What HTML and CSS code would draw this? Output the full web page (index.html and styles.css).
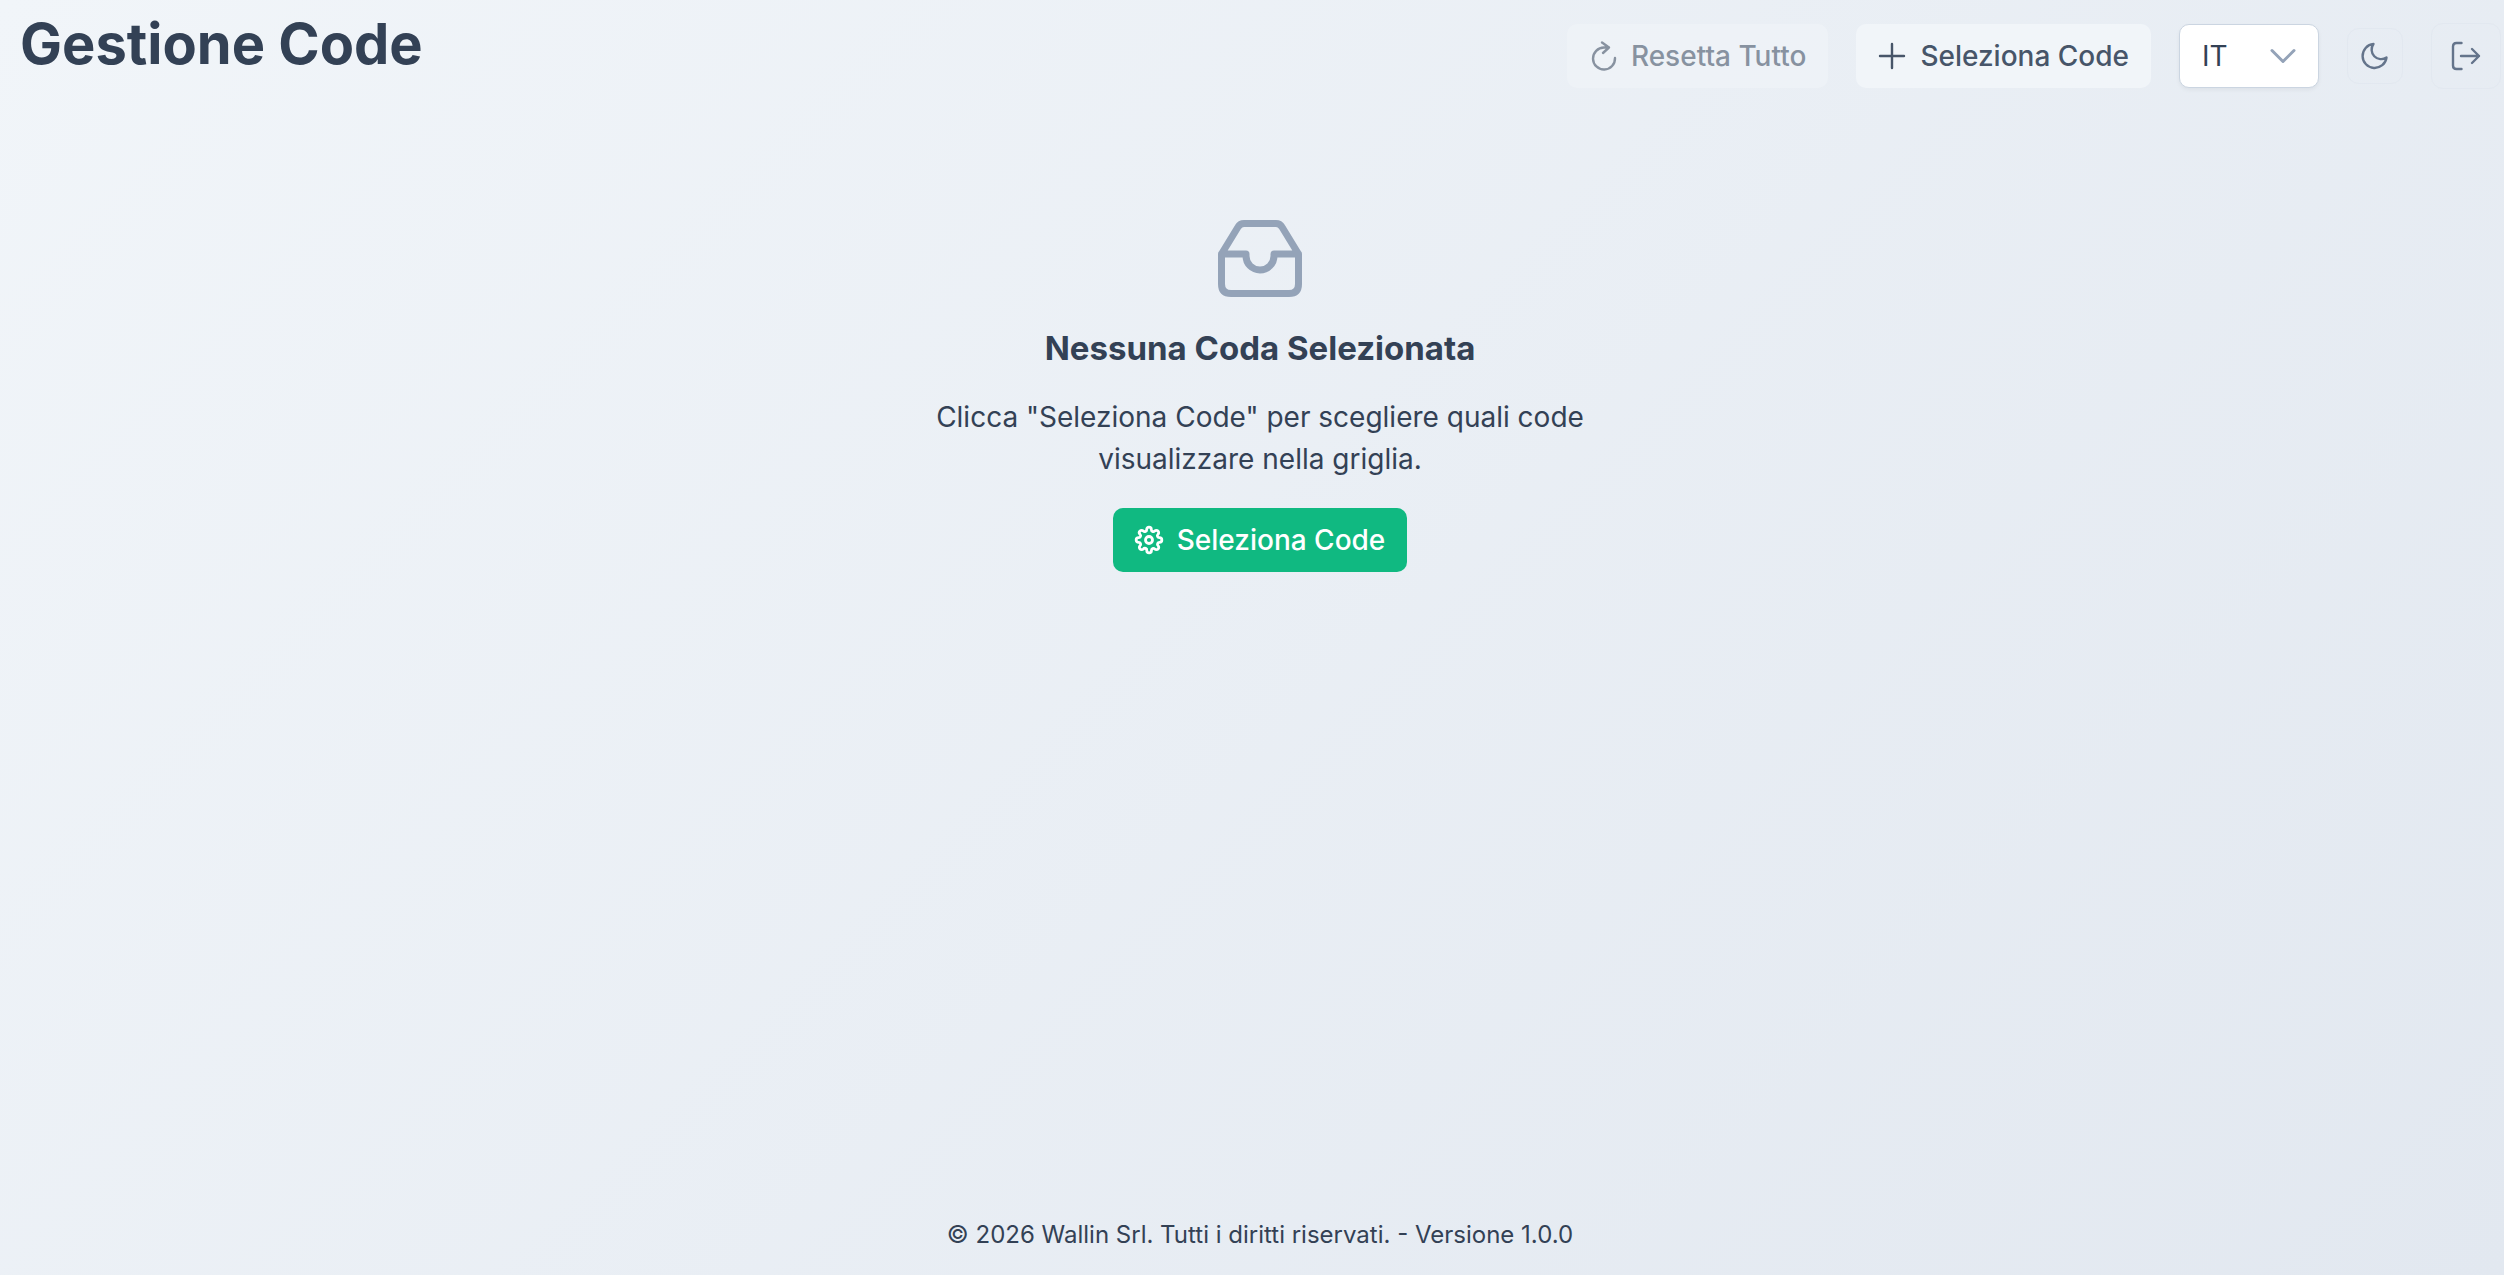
FILE: index.html
```
<!DOCTYPE html>
<html lang="it">
<head>
	<meta charset="UTF-8">
	<meta name="viewport" content="width=device-width, initial-scale=1">
	<title>Gestione Code</title>
	<link rel="stylesheet" href="styles.css">
</head>

<body>
	<div class="layout">
		<header class="topbar">
			<h1>Gestione Code</h1>
			<div class="toolbar">
				<button type="button" class="btn btn-light" disabled>
					<svg class="icon" viewBox="0 0 28 28"><path d="M13 0.5L20 5.5L14 11M20 5.5H15A11 11 0 1 0 26 16"/></svg>
					<span>Resetta Tutto</span>
				</button>
				<button type="button" class="btn btn-light">
					<svg class="icon" viewBox="0 0 28 28"><path d="M14 2V26M2 14H26"/></svg>
					<span>Seleziona Code</span>
				</button>
				<div class="lang">
					<select aria-label="Lingua">
						<option>IT</option>
						<option>EN</option>
					</select>
					<svg class="icon" viewBox="0 0 28 28"><path d="M3 8.5L14 19.5L25 8.5"/></svg>
				</div>
				<button type="button" class="btn-icon btn-theme" aria-label="Tema scuro">
					<svg class="icon" viewBox="0 0 28 28"><path d="M12.5 2A12 12 0 1 0 25.5 15.5A9.500 9.500 0 0 1 12.5 2Z"/></svg>
				</button>
				<button type="button" class="btn-icon btn-logout" aria-label="Esci">
					<svg class="icon" viewBox="0 0 28 28"><path d="M9.500 1H4.500Q1 1 1 4.500V23.500Q1 27 4.500 27H9.500M9 14H27M20 7L27 14L20 21"/></svg>
				</button>
			</div>
		</header>

		<main class="empty">
			<svg class="icon-inbox" viewBox="0 0 84 84"><path d="M3.500 38L20 11Q22 7.500 26 7.500H58Q62 7.500 64 11L80.500 38V68Q80.500 77.500 71 77.500H13Q3.500 77.500 3.500 68ZM3.500 38H28V40A14 14 0 0 0 56 40V38H80.500"/></svg>
			<h2>Nessuna Coda Selezionata</h2>
			<p>Clicca "Seleziona Code" per scegliere quali code visualizzare nella griglia.</p>
			<button type="button" class="btn btn-primary">
				<svg class="icon" viewBox="0 0 24 24"><circle cx="12" cy="12" r="3"/><path d="M19.400 15a1.650 1.650 0 0 0 .33 1.820l.06.06a2 2 0 1 1-2.830 2.830l-.06-.06a1.650 1.650 0 0 0-2.800 1.180V21a2 2 0 0 1-4 0v-.09a1.650 1.650 0 0 0-2.900-1.260l-.06.06a2 2 0 1 1-2.830-2.830l.06-.06a1.650 1.650 0 0 0-1.180-2.820H3a2 2 0 0 1 0-4h.09a1.650 1.650 0 0 0 1.260-2.820l-.06-.06a2 2 0 1 1 2.830-2.830l.06.06a1.650 1.650 0 0 0 2.820-1.180V3a2 2 0 0 1 4 0v.09a1.650 1.650 0 0 0 2.820 1.260l.06-.06a2 2 0 1 1 2.830 2.830l-.06.06a1.650 1.650 0 0 0 1.180 2.820H21a2 2 0 0 1 0 4h-.09a1.650 1.650 0 0 0-1.510 1z"/></svg>
				<span>Seleziona Code</span>
			</button>
		</main>

		<footer class="footer">© 2026 Wallin Srl. Tutti i diritti riservati. - Versione 1.0.0</footer>
	</div>
</body>
</html>
```

FILE: styles.css
```
*{box-sizing:border-box;}
body{margin:0; font-family:Inter, sans-serif; font-size:28px; line-height:42px; color:#334155; background:linear-gradient(135deg, #f1f5f9 0%, #e2e8f0 100%);}
h1,h2,p{margin:0;}
button,select{font:inherit; color:inherit;}

.layout{display:flex; flex-direction:column; min-height:100vh; padding-left:16px;}

/* header */
.topbar{display:flex; justify-content:space-between; align-items:flex-start; padding:10px 3px 0 4px;}
.topbar h1{font-size:56px; line-height:68px; font-weight:700;}
.toolbar{display:flex; align-items:center; gap:28px; padding-top:13px;}

/* buttons */
.btn{display:flex; align-items:center; gap:14px; height:64px; padding:0 21px; border:1px solid transparent; border-radius:10px; font-weight:500; cursor:pointer;}
.btn-light{background:#f1f5f9; color:#475569;}
.btn-light:disabled{opacity:.6; cursor:default;}
.btn-primary{background:#10b981; color:#fff;}
.icon{width:28px; height:28px; flex:none; fill:none; stroke:currentColor; stroke-width:2.4; stroke-linecap:round; stroke-linejoin:round; overflow:visible;}
.btn-icon{display:flex; align-items:center; justify-content:center; padding:0; border:1px solid #e2e8f0; border-radius:12px; background:none; color:#64748b; cursor:pointer;}
.btn-theme{width:56px; height:56px;}
.btn-logout{width:70px; height:66px;}

/* language */
.lang{position:relative;}
.lang select{display:block; width:140px; height:64px; padding:0 22px; appearance:none; border:1px solid #cbd5e1; border-radius:10px; background:#fff; box-shadow:0 2px 4px rgba(18,18,23,.05);}
.lang .icon{position:absolute; right:22px; top:18px; color:#94a3b8; stroke-width:3; pointer-events:none;}

/* empty state */
.empty{flex:1; display:flex; flex-direction:column; align-items:center; padding-top:127px; text-align:center;}
.icon-inbox{width:84px; height:84px; fill:none; stroke:#94a3b8; stroke-width:7; stroke-linecap:round; stroke-linejoin:round;}
.empty h2{margin-top:28px; font-size:33px; line-height:40px; font-weight:700;}
.empty p{max-width:700px; margin:28px 0;}

.footer{padding:20px 0 22px; font-size:24px; line-height:36px; text-align:center;}
```
